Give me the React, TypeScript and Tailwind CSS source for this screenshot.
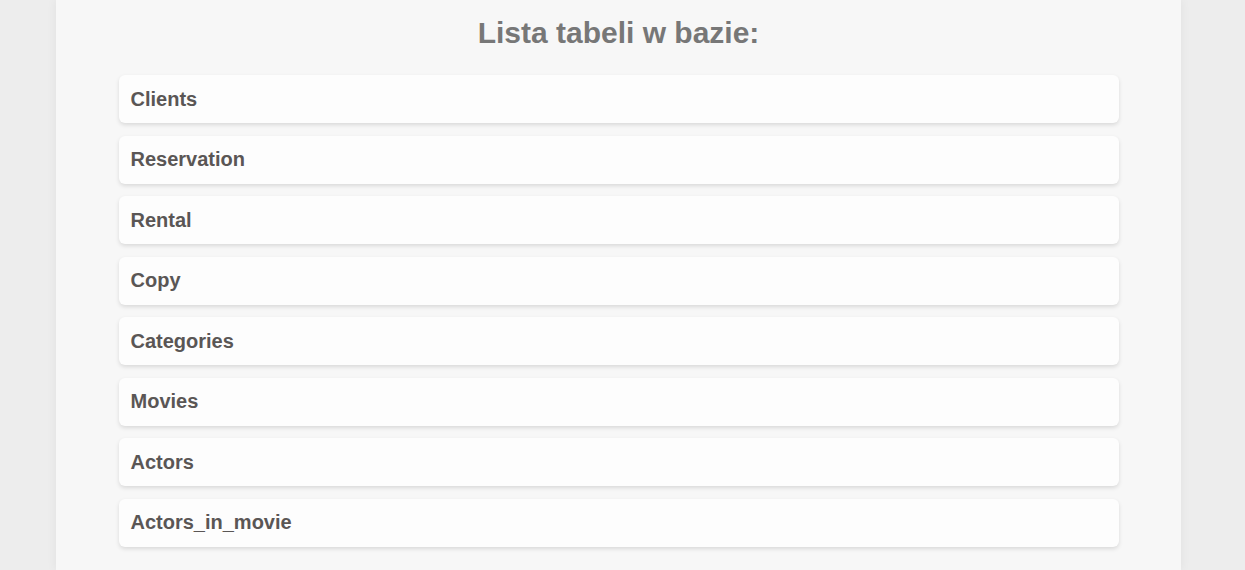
const tables = ['Clients', 'Reservation', 'Rental', 'Copy', 'Categories', 'Movies', 'Actors', 'Actors_in_movie'];

export default function App() {
  return (
    <div className="min-h-[570px] bg-[#ededed] font-['Liberation_Sans',Arial,sans-serif]">
      <div className="ml-[56px] min-h-[570px] w-[1125px] bg-[#f7f7f7] pt-[14px] pb-[20px] shadow-[0_0_10px_rgba(0,0,0,0.06)]">
        <h1 className="text-center text-[30px] font-bold leading-[38px] text-[#777777]">Lista tabeli w bazie:</h1>
        <ul className="mx-auto mt-[23px] flex w-[1000px] flex-col gap-[12.57px]">
          {tables.map((t) => (
            <li
              key={t}
              className="flex h-[48px] items-center rounded-[6px] bg-[#fdfdfd] px-[12px] pb-[1px] text-[20px] font-bold text-[#5a5655] shadow-[0_2px_4px_rgba(0,0,0,0.12)]"
            >
              {t}
            </li>
          ))}
        </ul>
      </div>
    </div>
  );
}
